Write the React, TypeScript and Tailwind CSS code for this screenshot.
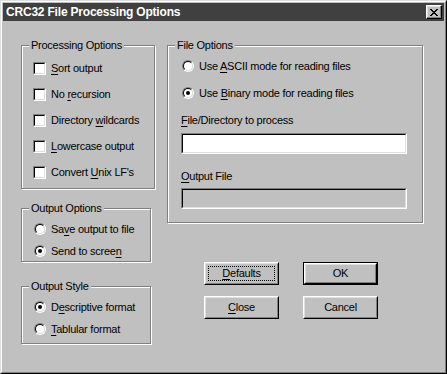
import type { ReactNode } from "react";

const Ul = ({ children }: { children: ReactNode }) => (
  <span className="underline decoration-1 underline-offset-[2px]">{children}</span>
);

const Checkbox = () => (
  <span className="block w-[13px] h-[13px] shrink-0 border border-t-[#808080] border-l-[#808080] border-r-white border-b-white">
    <span className="block w-full h-full bg-white border border-t-black border-l-black border-r-[#dfdfdf] border-b-[#dfdfdf]" />
  </span>
);

const Radio = ({ checked }: { checked?: boolean }) => (
  <span className="flex w-[12px] h-[12px] shrink-0 rounded-full border border-t-[#808080] border-l-[#808080] border-r-white border-b-white">
    <span className="flex items-center justify-center w-full h-full rounded-full bg-white border border-t-black border-l-black border-r-[#dfdfdf] border-b-[#dfdfdf]">
      {checked && <span className="w-[4px] h-[4px] rounded-full bg-black" />}
    </span>
  </span>
);

interface GroupBoxProps {
  title: string;
  className?: string;
  children: ReactNode;
}

const GroupBox: React.FC<GroupBoxProps> = ({ title, className, children }) => (
  <div
    className={`relative border border-[#808080] shadow-[inset_1px_1px_0_#fff,1px_1px_0_#fff] ${className ?? ""}`}
  >
    <span className="absolute left-[7px] top-[-7px] bg-[#c0c0c0] px-[2px] leading-[13px]">
      {title}
    </span>
    {children}
  </div>
);

const CheckRow = ({ children }: { children: ReactNode }) => (
  <div className="flex items-center gap-[5px] h-[13px]">
    <Checkbox />
    <span className="leading-[13px]">{children}</span>
  </div>
);

const RadioRow = ({ checked, children }: { checked?: boolean; children: ReactNode }) => (
  <div className="flex items-center gap-[5px] h-[12px]">
    <Radio checked={checked} />
    <span className="leading-[13px]">{children}</span>
  </div>
);

const Field = ({ disabled }: { disabled?: boolean }) => (
  <div className="w-[226px] h-[21px] border border-t-[#808080] border-l-[#808080] border-r-white border-b-white">
    <div
      className={`w-full h-full border border-t-black border-l-black border-r-[#dfdfdf] border-b-[#dfdfdf] ${
        disabled ? "bg-[#c0c0c0]" : "bg-white"
      }`}
    />
  </div>
);

interface ButtonProps {
  children: ReactNode;
  isDefault?: boolean;
  focused?: boolean;
}

const Button: React.FC<ButtonProps> = ({ children, isDefault, focused }) => (
  <div className={`w-[75px] h-[23px] ${isDefault ? "border border-black" : ""}`}>
    <div className="h-full border border-t-white border-l-white border-r-black border-b-black">
      <div className="h-full p-[2px] border border-t-[#dfdfdf] border-l-[#dfdfdf] border-r-[#808080] border-b-[#808080]">
        <div
          className={`h-full flex items-center justify-center leading-[13px] border ${
            focused ? "border-dotted border-black" : "border-transparent"
          }`}
        >
          {children}
        </div>
      </div>
    </div>
  </div>
);

const CloseGlyph = () => (
  <svg width="8" height="7" viewBox="0 0 8 7" shapeRendering="crispEdges">
    <path
      d="M0 0h2v1H0zM6 0h2v1H6zM1 1h2v1H1zM5 1h2v1H5zM2 2h4v1H2zM3 3h2v1H3zM2 4h4v1H2zM1 5h2v1H1zM5 5h2v1H5zM0 6h2v1H0zM6 6h2v1H6z"
      fill="#000"
    />
  </svg>
);

export default function App() {
  return (
    <div className="w-[447px] h-[374px] bg-[#c0c0c0] border border-t-[#dfdfdf] border-l-[#dfdfdf] border-r-black border-b-black font-['Liberation_Sans',Arial,sans-serif] text-[11px] text-black tracking-[-0.25px]">
      <div className="h-full p-[1px] border border-t-white border-l-white border-r-[#808080] border-b-[#808080]">
        <div className="flex items-center justify-between h-[18px] bg-[#404040] pl-[3px] pr-[2px]">
          <span className="text-white font-bold text-[12px] tracking-[-0.2px] leading-[14px]">
            CRC32 File Processing Options
          </span>
          <button className="flex items-center justify-center w-[16px] h-[14px] bg-[#c0c0c0] border border-t-white border-l-white border-r-black border-b-black shadow-[inset_-1px_-1px_0_#808080,inset_1px_1px_0_#dfdfdf]">
            <CloseGlyph />
          </button>
        </div>

        <div className="flex items-start pl-[18px] pt-[24px]">
          <div className="flex flex-col w-[134px]">
            <GroupBox title="Processing Options" className="w-[134px] h-[144px]">
              <div className="flex flex-col gap-[13px] pl-[11px] pt-[16px]">
                <CheckRow>
                  <Ul>S</Ul>ort output
                </CheckRow>
                <CheckRow>
                  No <Ul>r</Ul>ecursion
                </CheckRow>
                <CheckRow>
                  Directory <Ul>w</Ul>ildcards
                </CheckRow>
                <CheckRow>
                  <Ul>L</Ul>owercase output
                </CheckRow>
                <CheckRow>
                  Convert <Ul>U</Ul>nix LF's
                </CheckRow>
              </div>
            </GroupBox>

            <GroupBox title="Output Options" className="w-[130px] h-[54px] mt-[19px]">
              <div className="flex flex-col gap-[10px] pl-[12px] pt-[14px]">
                <RadioRow>
                  Sa<Ul>v</Ul>e output to file
                </RadioRow>
                <RadioRow checked>
                  Send to scree<Ul>n</Ul>
                </RadioRow>
              </div>
            </GroupBox>

            <GroupBox title="Output Style" className="w-[130px] h-[58px] mt-[24px]">
              <div className="flex flex-col gap-[10px] pl-[12px] pt-[14px]">
                <RadioRow checked>
                  D<Ul>e</Ul>scriptive format
                </RadioRow>
                <RadioRow>
                  <Ul>T</Ul>ablular format
                </RadioRow>
              </div>
            </GroupBox>
          </div>

          <div className="flex flex-col ml-[12px]">
            <GroupBox title="File Options" className="w-[256px] h-[178px]">
              <div className="flex flex-col pl-[13px] pt-[14px]">
                <div className="flex flex-col gap-[15px] pl-[1px]">
                  <RadioRow>
                    Use <Ul>A</Ul>SCII mode for reading files
                  </RadioRow>
                  <RadioRow checked>
                    Use <Ul>B</Ul>inary mode for reading files
                  </RadioRow>
                </div>
                <span className="leading-[13px] mt-[15px]">
                  <Ul>F</Ul>ile/Directory to process
                </span>
                <div className="mt-[6px]">
                  <Field />
                </div>
                <span className="leading-[13px] mt-[16px]">
                  <Ul>O</Ul>utput File
                </span>
                <div className="mt-[5px]">
                  <Field disabled />
                </div>
              </div>
            </GroupBox>

            <div className="grid grid-cols-[75px_75px] gap-x-[24px] gap-y-[11px] ml-[37px] mt-[39px]">
              <Button focused>
                <Ul>D</Ul>efaults
              </Button>
              <Button isDefault>OK</Button>
              <Button>
                <Ul>C</Ul>lose
              </Button>
              <Button>Cancel</Button>
            </div>
          </div>
        </div>
      </div>
    </div>
  );
}
